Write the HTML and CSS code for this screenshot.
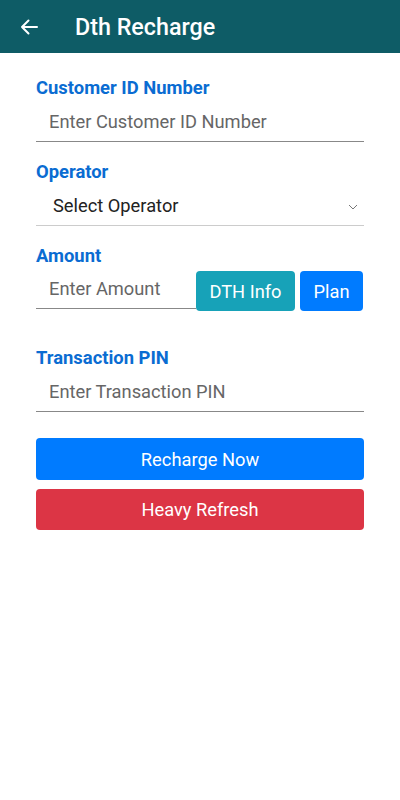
FILE: index.html
```html
<!DOCTYPE html>
<html lang="en">
<head>
    <meta charset="UTF-8">
    <meta name="viewport" content="width=device-width, initial-scale=1.0">
    <title>Dth Recharge</title>
    <link rel="stylesheet" href="styles.css">
</head>
<body>
    <div class="topbar">
        <svg class="back" width="18" height="16" viewBox="0 0 18 16">
            <path d="M17 8H2M8.5 1.5L2 8l6.5 6.5" fill="none" stroke="#fff" stroke-width="2" stroke-linecap="round" stroke-linejoin="round"/>
        </svg>
        <h1>Dth Recharge</h1>
    </div>
    <div class="form">
        <div class="field">
            <label>Customer ID Number</label>
            <div class="input">Enter Customer ID Number</div>
        </div>
        <div class="field">
            <label>Operator</label>
            <div class="select">
                <span>Select Operator</span>
                <svg width="10" height="6" viewBox="0 0 10 6">
                    <path d="M1 1l4 4 4-4" fill="none" stroke="#777" stroke-width="1"/>
                </svg>
            </div>
        </div>
        <div class="field">
            <label>Amount</label>
            <div class="amount-row">
                <div class="input amount">Enter Amount</div>
                <button class="btn btn-info">DTH Info</button>
                <button class="btn btn-primary">Plan</button>
            </div>
        </div>
        <div class="field pin">
            <label>Transaction PIN</label>
            <div class="input">Enter Transaction PIN</div>
        </div>
        <button class="btn btn-primary wide first">Recharge Now</button>
        <button class="btn btn-danger wide">Heavy Refresh</button>
    </div>
</body>
</html>
```

FILE: styles.css
```css
body {
    margin: 0;
    font-family: Roboto, 'Liberation Sans', sans-serif;
    background: #fff;
    color: #222;
}

.topbar {
    height: 53px;
    background: #0e5c66;
    display: flex;
    align-items: center;
    padding-left: 20px;
    box-sizing: border-box;
}

.topbar h1 {
    margin: 0 0 0 37px;
    color: #fff;
    font-size: 23.3px;
    font-weight: 500;
}

.form {
    padding: 25px 36px 0 36px;
    display: flex;
    flex-direction: column;
}

.field {
    margin-bottom: 20px;
}

.field label {
    display: block;
    color: #0a6cd2;
    font-size: 18.4px;
    font-weight: 700;
    line-height: 20px;
}

.input {
    height: 38px;
    line-height: 38px;
    padding-left: 13px;
    color: #666;
    font-size: 18.3px;
    border-bottom: 1px solid #888;
    margin-top: 5px;
}

.select {
    height: 39px;
    margin-top: 5px;
    padding: 0 6px 2px 17px;
    box-sizing: border-box;
    display: flex;
    align-items: center;
    justify-content: space-between;
    font-size: 18.3px;
    color: #222;
    border-bottom: 1px solid #ccc;
}

.select svg {
    margin-top: 3px;
}

.amount-row {
    display: flex;
    align-items: flex-end;
    margin-top: 5px;
}

.amount-row .amount {
    width: 147px;
    margin-top: 0;
    height: 37px;
    line-height: 36px;
    margin-bottom: 2px;
}

.btn {
    border: none;
    border-radius: 4px;
    color: #fff;
    font-family: inherit;
    font-size: 18.3px;
    padding: 0;
    cursor: pointer;
}

.amount-row .btn {
    height: 40px;
}

.btn-info {
    background: #17a2b8;
    width: 99px;
}

.btn-primary {
    background: #007bff;
}

.amount-row .btn-primary {
    width: 63px;
    margin-left: 5px;
}

.btn-danger {
    background: #dc3545;
}

.pin {
    margin-top: 17px;
}

.wide {
    height: 42px;
    width: 100%;
}

.first {
    margin-top: 6px;
    margin-bottom: 9px;
}

.btn-danger.wide {
    height: 41px;
}
```
